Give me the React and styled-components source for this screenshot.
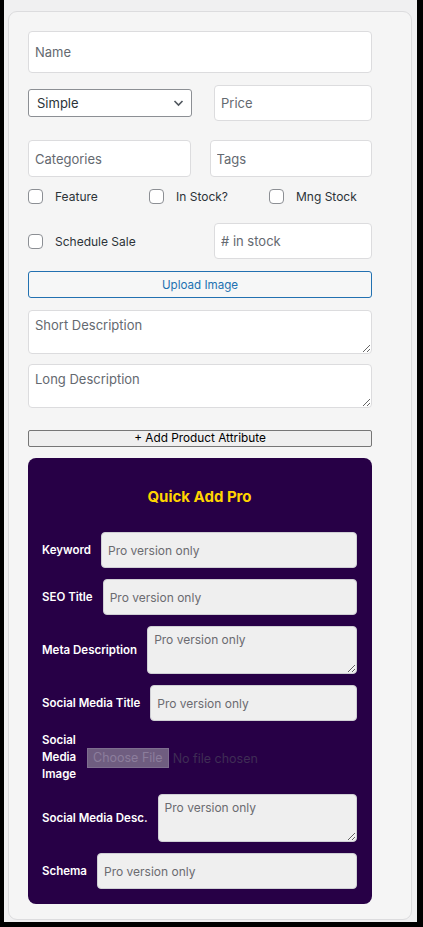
import React from "react";
import styled, { createGlobalStyle } from "styled-components";

const GlobalStyle = createGlobalStyle`
  html, body {
    margin: 0;
    padding: 0;
    background: #000;
  }
  body {
    font-family: Inter, "Noto Sans", "Liberation Sans", sans-serif;
  }
  * {
    box-sizing: border-box;
  }
`;

const Page = styled.div`
  width: 413px;
  height: 922px;
  margin-left: 4px;
  padding: 11px 5px 0 4px;
  background: #f0f0f1;
`;

const Panel = styled.div`
  width: 404px;
  background: #f5f5f5;
  border: 1px solid #dcdcde;
  border-radius: 9px;
  padding: 19px 39px 15px 19px;
  display: flex;
  flex-direction: column;
`;

const Row = styled.div`
  display: flex;
  align-items: center;
  justify-content: space-between;
  gap: ${(p) => p.$gap || 20}px;
  margin-top: ${(p) => p.$top || 0}px;
`;

const TextInput = styled.input`
  display: block;
  width: ${(p) => p.$width || "100%"};
  height: ${(p) => p.$height || 36}px;
  padding: 0 6px;
  font-family: inherit;
  font-size: 13px;
  color: #2c3338;
  background: #fff;
  border: 1px solid #dcdcde;
  border-radius: 4px;
  outline: none;
  &::placeholder {
    color: #646970;
  }
`;

const TextArea = styled.textarea`
  display: block;
  width: 100%;
  height: ${(p) => p.$height || 44}px;
  margin-top: ${(p) => p.$top || 0}px;
  padding: 6px 6px;
  font-family: inherit;
  font-size: 13px;
  color: #2c3338;
  background: #fff;
  border: 1px solid #dcdcde;
  border-radius: 4px;
  outline: none;
  &::placeholder {
    color: #646970;
  }
`;

const SelectWrap = styled.div`
  position: relative;
  width: 164px;
  flex-shrink: 0;
  svg {
    position: absolute;
    right: 8px;
    top: 10px;
    pointer-events: none;
  }
`;

const Select = styled.select`
  appearance: none;
  width: 100%;
  height: 28px;
  padding: 0 24px 0 8px;
  font-family: inherit;
  font-size: 13px;
  color: #2c3338;
  background: #fff;
  border: 1px solid #8c8f94;
  border-radius: 3px;
`;

const CheckGrid = styled.div`
  display: grid;
  grid-template-columns: 121px 120px auto;
  margin-top: 11px;
`;

const CheckLabel = styled.label`
  display: flex;
  align-items: center;
  gap: 12px;
  font-size: 12px;
  color: #2c3338;
  height: 16px;
`;

const Box = styled.input.attrs({ type: "checkbox" })`
  appearance: none;
  width: 15px;
  height: 15px;
  margin: 0;
  background: #fff;
  border: 1px solid #8c8f94;
  border-radius: 4px;
  flex-shrink: 0;
`;

const OutlineButton = styled.button`
  width: 100%;
  height: 27px;
  margin-top: ${(p) => p.$top || 0}px;
  font-family: inherit;
  font-size: 11.6px;
  color: #2271b1;
  background: #f6f7f7;
  border: 1px solid #2271b1;
  border-radius: 3px;
`;

const PlainButton = styled.button`
  width: 100%;
  height: 17px;
  margin-top: 22px;
  padding: 0;
  font-family: inherit;
  font-size: 11.8px;
  line-height: 15px;
  color: #000;
  background: #efefef;
  border: 1px solid #767676;
  border-radius: 2px;
`;

const ProBox = styled.div`
  margin-top: 11px;
  background: #270046;
  border-radius: 8px;
  padding: 29px 15px 15px 14px;
  display: flex;
  flex-direction: column;
  gap: 11px;
`;

const ProTitle = styled.h3`
  margin: 0 0 14px;
  text-align: center;
  font-size: 15px;
  line-height: 20px;
  font-weight: 700;
  color: #ffd400;
`;

const ProRow = styled.div`
  display: flex;
  align-items: center;
`;

const ProLabel = styled.span`
  flex: ${(p) => (p.$wrap ? "1 1 auto" : "0 0 auto")};
  min-width: 0;
  margin-right: 10px;
  font-size: 11.5px;
  line-height: ${(p) => (p.$wrap ? 17 : 16)}px;
  font-weight: 600;
  color: #fff;
`;

const ProInput = styled.input`
  flex: 1;
  min-width: 0;
  height: 36px;
  padding: 0 6px;
  font-family: inherit;
  font-size: 12px;
  background: #efefef;
  border: 1px solid #cfcfd4;
  border-radius: 4px;
  outline: none;
  &::placeholder {
    color: #6b6b70;
  }
`;

const ProArea = styled.textarea`
  flex: 1;
  min-width: 0;
  height: 48px;
  padding: 5px 6px;
  font-family: inherit;
  font-size: 12px;
  background: #efefef;
  border: 1px solid #cfcfd4;
  border-radius: 4px;
  outline: none;
  resize: vertical;
  &::placeholder {
    color: #6b6b70;
  }
`;

const FileInput = styled.input.attrs({ type: "file", disabled: true })`
  flex: 0 0 270px;
  width: 270px;
  min-width: 0;
  overflow: hidden;
  font-family: inherit;
  font-size: 12.5px;
  color: #3f2d55;
  &::file-selector-button {
    font-family: inherit;
    font-size: 12.5px;
    height: 20px;
    padding: 0 5px;
    margin-right: 4px;
    color: #8c7d9c;
    background: #6f5d80;
    border: 1px solid #7e6e8f;
    border-radius: 0;
  }
`;

function Chevron() {
  return (
    <svg width="11" height="8" viewBox="0 0 11 8">
      <path d="M1.5 2 L5.5 6 L9.5 2" fill="none" stroke="#50575e" strokeWidth="1.6" />
    </svg>
  );
}

const proFields = [
  { label: "Keyword" },
  { label: "SEO Title" },
  { label: "Meta Description", area: true },
  { label: "Social Media Title" },
  { label: "Social Media Image", file: true },
  { label: "Social Media Desc.", area: true },
  { label: "Schema" },
];

export default function App() {
  return (
    <>
      <GlobalStyle />
      <Page>
        <Panel>
          <TextInput placeholder="Name" $height={42} />
          <Row $top={12} $gap={21}>
            <SelectWrap>
              <Select defaultValue="simple">
                <option value="simple">Simple</option>
                <option value="variable">Variable</option>
              </Select>
              <Chevron />
            </SelectWrap>
            <TextInput placeholder="Price" $width="158px" />
          </Row>
          <Row $top={19} $gap={19}>
            <TextInput placeholder="Categories" $height={37} />
            <TextInput placeholder="Tags" $height={37} />
          </Row>
          <CheckGrid>
            <CheckLabel>
              <Box />
              Feature
            </CheckLabel>
            <CheckLabel>
              <Box />
              In Stock?
            </CheckLabel>
            <CheckLabel>
              <Box />
              Mng Stock
            </CheckLabel>
          </CheckGrid>
          <Row $top={19}>
            <CheckLabel>
              <Box />
              Schedule Sale
            </CheckLabel>
            <TextInput placeholder="# in stock" $width="158px" />
          </Row>
          <OutlineButton $top={12}>Upload Image</OutlineButton>
          <TextArea placeholder="Short Description" $top={12} />
          <TextArea placeholder="Long Description" $top={10} />
          <PlainButton>+ Add Product Attribute</PlainButton>
          <ProBox>
            <ProTitle>Quick Add Pro</ProTitle>
            {proFields.map((f) => (
              <ProRow key={f.label}>
                <ProLabel $wrap={f.file}>{f.label}</ProLabel>
                {f.file ? (
                  <FileInput />
                ) : f.area ? (
                  <ProArea placeholder="Pro version only" disabled />
                ) : (
                  <ProInput placeholder="Pro version only" disabled />
                )}
              </ProRow>
            ))}
          </ProBox>
        </Panel>
      </Page>
    </>
  );
}
